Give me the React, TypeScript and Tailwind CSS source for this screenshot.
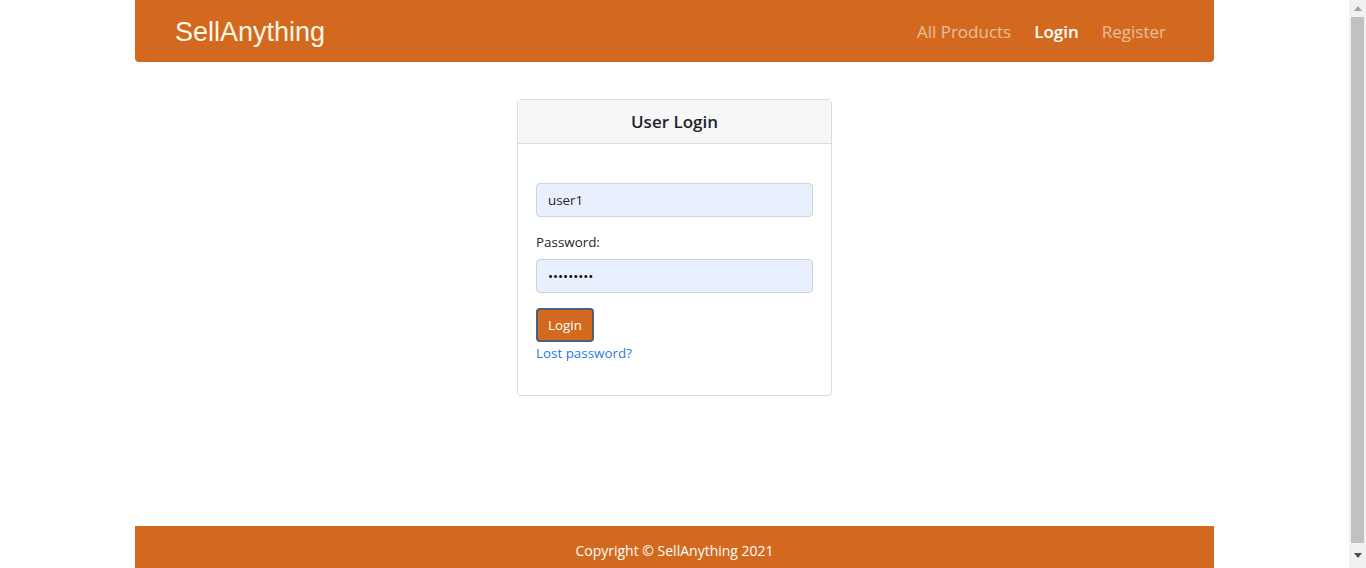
import React, { useState } from 'react';

const font = { fontFamily: '"Open Sans", "Noto Sans", sans-serif' };

const ScrollbarStrip: React.FC = () => (
    <div className="w-[17px] h-full bg-[#f1f1f1] flex flex-col items-center">
        <div className="h-[17px] flex items-center justify-center">
            <svg width="8" height="5" viewBox="0 0 8 5"><path d="M4 0 L8 5 L0 5 Z" fill="#a3a3a3" /></svg>
        </div>
        <div className="w-[13px] h-[526px] bg-[#c1c1c1]" />
        <div className="flex-1 flex items-center justify-center">
            <svg width="8" height="5" viewBox="0 0 8 5"><path d="M0 0 L8 0 L4 5 Z" fill="#505050" /></svg>
        </div>
    </div>
);

const App: React.FC = () => {
    const [username, setUsername] = useState('user1');
    const [password, setPassword] = useState('secret123');

    return (
        <div className="h-[568px] flex bg-white text-[#212529] overflow-hidden" style={font}>
            <div className="flex-1 flex flex-col">
                <nav className="w-[1079px] mx-auto h-[62px] shrink-0 bg-[#d2691e] rounded-b-[4px] flex items-center justify-between pl-[40px] pr-[48px]">
                    <a href="#" className="text-[27px] text-[#fff8e7] font-['Liberation_Sans',Arial,sans-serif] leading-none mt-[2px]">
                        SellAnything
                    </a>
                    <div className="flex items-center gap-[23px] text-[17px] mt-[1px]">
                        <a href="#" className="text-white/55">All Products</a>
                        <a href="#" className="text-white font-semibold">Login</a>
                        <a href="#" className="text-white/55">Register</a>
                    </div>
                </nav>

                <main className="h-[464px] shrink-0 flex justify-center pt-[37px]">
                    <div className="w-[315px] h-[297px] border border-[#dcdcdc] rounded-[4px] flex flex-col">
                        <div className="h-[44px] bg-[#f7f7f7] border-b border-[#dcdcdc] flex items-center justify-center">
                            <h2 className="text-[17px] font-semibold text-[#212529]">User Login</h2>
                        </div>
                        <div className="px-[18px] pt-[39px] text-[13.4px]">
                            <input
                                value={username}
                                onChange={(e) => setUsername(e.target.value)}
                                className="w-full h-[34px] px-[11px] bg-[#e8f0fe] border border-[#ced4da] rounded-[4px] text-[13.4px] outline-none"
                            />
                            <label className="block mt-[15px] mb-[7px]">Password:</label>
                            <input
                                type="password"
                                value={password}
                                onChange={(e) => setPassword(e.target.value)}
                                className="w-full h-[34px] px-[11px] bg-[#e8f0fe] border border-[#ced4da] rounded-[4px] text-[13.4px] text-black outline-none"
                            />
                            <button className="mt-[15px] h-[34px] px-[10px] bg-[#d2691e] text-white border-2 border-[#4b5e7a] rounded-[4px] text-[13.4px]">
                                Login
                            </button>
                            <a href="#" className="block mt-[1px] text-[#2a7ae2]">Lost password?</a>
                        </div>
                    </div>
                </main>

                <footer className="w-[1079px] mx-auto h-[50px] shrink-0 bg-[#d2691e] flex items-center justify-center text-white text-[14px] pb-[2px]">
                    Copyright © SellAnything 2021
                </footer>
            </div>
            <ScrollbarStrip />
        </div>
    );
};

export default App;
